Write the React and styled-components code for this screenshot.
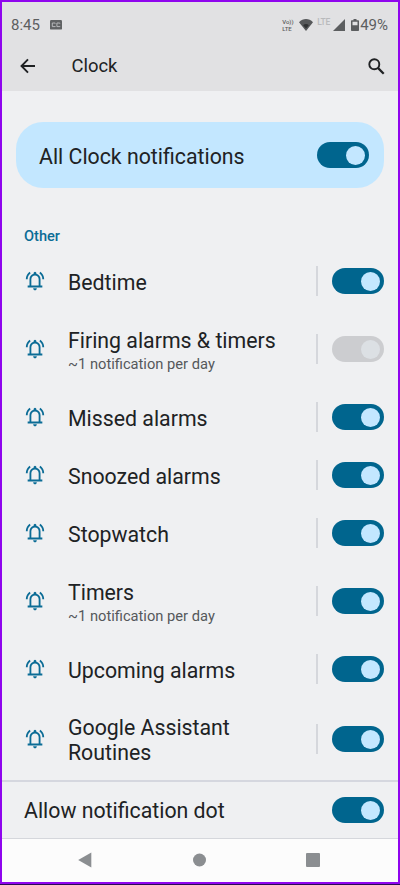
import { useState } from "react";
import styled, { createGlobalStyle } from "styled-components";

const channels = [
    { id: 1, name: "Bedtime", on: true },
    { id: 2, name: "Firing alarms & timers", note: "~1 notification per day", on: false, locked: true },
    { id: 3, name: "Missed alarms", on: true },
    { id: 4, name: "Snoozed alarms", on: true },
    { id: 5, name: "Stopwatch", on: true },
    { id: 6, name: "Timers", note: "~1 notification per day", on: true },
    { id: 7, name: "Upcoming alarms", on: true },
    { id: 8, name: "Google Assistant Routines", on: true },
];

function Toggle({ start, disabled }) {
    const [on, setOn] = useState(start);

    return (
        <Track role="switch" aria-checked={on} disabled={disabled} $on={on} onClick={() => setOn(!on)}>
            <Knob />
        </Track>
    )
}

function BellIcon() {
    return (
        <svg width="22" height="22" viewBox="0 -960 960 960" fill="#0b6c96">
            <path d="M80-560q0-100 44.5-183.5T244-882l47 64q-60 44-95.5 111T160-560H80Zm720 0q0-80-35.5-147T669-818l47-64q75 55 119.5 138.5T880-560h-80ZM160-200v-80h80v-280q0-83 50-147.5T420-792v-28q0-25 17.5-42.5T480-880q25 0 42.5 17.5T540-820v28q80 20 130 84.5T720-560v280h80v80H160Zm320 120q-33 0-56.5-23.5T400-160h160q0 33-23.5 56.5T480-80ZM320-280h320v-280q0-66-47-113t-113-47q-66 0-113 47t-47 113v280Z" />
        </svg>
    )
}

function StatusBar() {
    return (
        <Status>
            <Time>8:45</Time>
            <svg width="12" height="10" viewBox="0 0 12 10">
                <rect width="12" height="9.6" rx="1.2" fill="#606264" />
                <path d="M5.2 3.6V3H2.3v3.6h2.9V6M9.8 3.6V3H6.9v3.6h2.9V6" fill="none" stroke="#c0c1c3" strokeWidth="0.9" />
            </svg>
            <StatusRight>
                <Volte><span>Vo))</span><span>LTE</span></Volte>
                <Wifi width="14" height="12" viewBox="0 0 14 12">
                    <path d="M0 3.2C4-1 10-1 14 3.2L7 12Z" fill="#56585a" />
                    <path d="M4.2 6.2c1.6-1.5 4-1.5 5.6 0L7 9.6Z" fill="#303234" />
                </Wifi>
                <Lte>LTE</Lte>
                <Signal width="12" height="12" viewBox="0 0 12 12">
                    <path d="M12 0v12H0Z" fill="#5c5e60" />
                </Signal>
                <Battery width="8" height="12" viewBox="0 0 8 12">
                    <path d="M2.5 0h3v1.2H7.2q.8 0 .8.8v9.2q0 .8-.8.8H.8q-.8 0-.8-.8V2q0-.8.8-.8h1.7ZM1.5 2.7v3.5h5V2.7Z" fill="#5c5e60" fillRule="evenodd" />
                </Battery>
                <Percent>49%</Percent>
            </StatusRight>
        </Status>
    )
}

function App() {
    return (
        <>
            <GlobalStyle />
            <Screen>
                <Header>
                    <StatusBar />
                    <TitleBar>
                        <svg width="16" height="16" viewBox="0 0 16 16" fill="none" stroke="#1f2123" strokeWidth="1.9">
                            <path d="M15 8H2M8 1.4L1.5 8L8 14.6" />
                        </svg>
                        <PageTitle>Clock</PageTitle>
                        <svg width="17" height="17" viewBox="0 0 17 17" fill="none" stroke="#1f2123" strokeWidth="1.9">
                            <circle cx="6.3" cy="6.3" r="5" />
                            <path d="M9.9 9.9L15.7 15.7" strokeWidth="2.2" />
                        </svg>
                    </TitleBar>
                </Header>

                <MainSwitch>
                    <MainLabel>All Clock notifications</MainLabel>
                    <Toggle start={true} />
                </MainSwitch>

                <SectionTitle>Other</SectionTitle>

                <ChannelList>
                    {channels.map((channel) =>
                        <Channel key={channel.id} $note={channel.note}>
                            <BellIcon />
                            <ChannelText $note={channel.note}>
                                <Name>{channel.name}</Name>
                                {channel.note && <Note>{channel.note}</Note>}
                            </ChannelText>
                            <Divider />
                            <Toggle start={channel.on} disabled={channel.locked} />
                        </Channel>
                    )}
                </ChannelList>

                <DotRow>
                    <Name>Allow notification dot</Name>
                    <Toggle start={true} />
                </DotRow>

                <NavBar>
                    <svg width="14" height="16" viewBox="0 0 14 16"><path d="M13.3.5v15L.2 8Z" fill="#8b8e91" /></svg>
                    <svg width="14" height="14" viewBox="0 0 14 14"><circle cx="7.5" cy="7" r="6.5" fill="#8b8e91" /></svg>
                    <svg width="14" height="14" viewBox="0 0 14 14"><rect width="14" height="14" rx="1" fill="#8b8e91" /></svg>
                </NavBar>
            </Screen>
        </>
    )
}

export default App;

const GlobalStyle = createGlobalStyle`
    * {
        box-sizing: border-box;
    }
    body {
        margin: 0;
        font-family: Roboto, sans-serif;
        background-color: #2a0a55;
    }
    svg {
        display: block;
        flex-shrink: 0;
    }
`

const Screen = styled.div`
    width: 400px;
    height: 884px;
    border: 2px solid #8f05ee;
    background-color: #eff0f2;
    color: #202224;
    display: flex;
    flex-direction: column;
    overflow: hidden;
`

const Header = styled.header`
    height: 89px;
    flex-shrink: 0;
    background-color: #e1e1e3;
`

const Status = styled.div`
    height: 43px;
    padding: 2px 10px 0 9px;
    display: flex;
    align-items: center;
    color: #5c5e60;
`

const Time = styled.span`
    width: 39px;
    font-size: 15px;
`

const StatusRight = styled.div`
    margin-left: auto;
    display: flex;
    align-items: center;
`

const Volte = styled.div`
    width: 17px;
    display: flex;
    flex-direction: column;
    font-size: 6px;
    line-height: 7px;
    font-weight: 500;
`

const Wifi = styled.svg`
    margin-right: 4px;
`

const Lte = styled.span`
    width: 16px;
    height: 13px;
    font-size: 8.5px;
    line-height: 8px;
    font-weight: 500;
    letter-spacing: -0.2px;
    color: #b9babc;
`

const Signal = styled.svg`
    margin-right: 6px;
`

const Battery = styled.svg`
    margin-right: 1px;
`

const Percent = styled.span`
    font-size: 15px;
`

const TitleBar = styled.div`
    height: 42px;
    padding: 0 13px 0 18px;
    display: flex;
    align-items: center;
`

const PageTitle = styled.h1`
    flex: 1;
    margin: 0 0 0 35.5px;
    font-size: 18.4px;
    line-height: 22px;
    font-weight: 400;
`

const MainSwitch = styled.div`
    height: 66px;
    margin: 31px 14px 0;
    padding: 0 15px 0 23px;
    border-radius: 27px;
    flex-shrink: 0;
    display: flex;
    align-items: center;
    justify-content: space-between;
    background-color: #c3e7ff;
`

const Name = styled.span`
    font-size: 21.3px;
    line-height: 25px;
`

const MainLabel = styled(Name)`
    padding-top: 2px;
`

const SectionTitle = styled.h2`
    height: 64px;
    margin: 0;
    padding: 39px 0 0 22px;
    flex-shrink: 0;
    font-size: 14.6px;
    line-height: 18px;
    font-weight: 500;
    color: #0b6c96;
`

const ChannelList = styled.div`
    display: flex;
    flex-direction: column;
`

const Channel = styled.div`
    height: ${({ $note }) => $note ? '78px' : '58px'};
    padding: 0 14px 0 22px;
    display: flex;
    align-items: center;
    &:last-child {
        height: 82px;
    }
`

const ChannelText = styled.div`
    flex: 1;
    padding: ${({ $note }) => $note ? '4px' : '2px'} 10px 0 0;
    margin-left: 22px;
    display: flex;
    flex-direction: column;
`

const Note = styled.span`
    font-size: 14.7px;
    line-height: 22px;
    color: #55585b;
`

const Divider = styled.div`
    width: 2px;
    height: 30px;
    margin-right: 14px;
    background-color: #d5d7dc;
`

const Track = styled.button`
    width: 52px;
    height: 26px;
    padding: 0 4px;
    border: none;
    border-radius: 13px;
    flex-shrink: 0;
    display: flex;
    align-items: center;
    justify-content: ${({ $on, disabled }) => $on || disabled ? 'flex-end' : 'flex-start'};
    background-color: ${({ disabled }) => disabled ? '#cccdd0' : '#00658e'};
    span {
        background-color: ${({ disabled }) => disabled ? '#dce0e4' : '#c3e7ff'};
    }
`

const Knob = styled.span`
    width: 19px;
    height: 19px;
    border-radius: 50%;
`

const DotRow = styled.div`
    height: 59px;
    padding: 0 14px 0 22px;
    border-top: 2px solid #d5d7df;
    border-bottom: 1px solid #d5d7dc;
    flex-shrink: 0;
    display: flex;
    align-items: center;
    justify-content: space-between;
`

const NavBar = styled.nav`
    flex: 1;
    padding: 0 78px 1px 76px;
    display: flex;
    align-items: center;
    justify-content: space-between;
    background-color: #fcfcfc;
`
